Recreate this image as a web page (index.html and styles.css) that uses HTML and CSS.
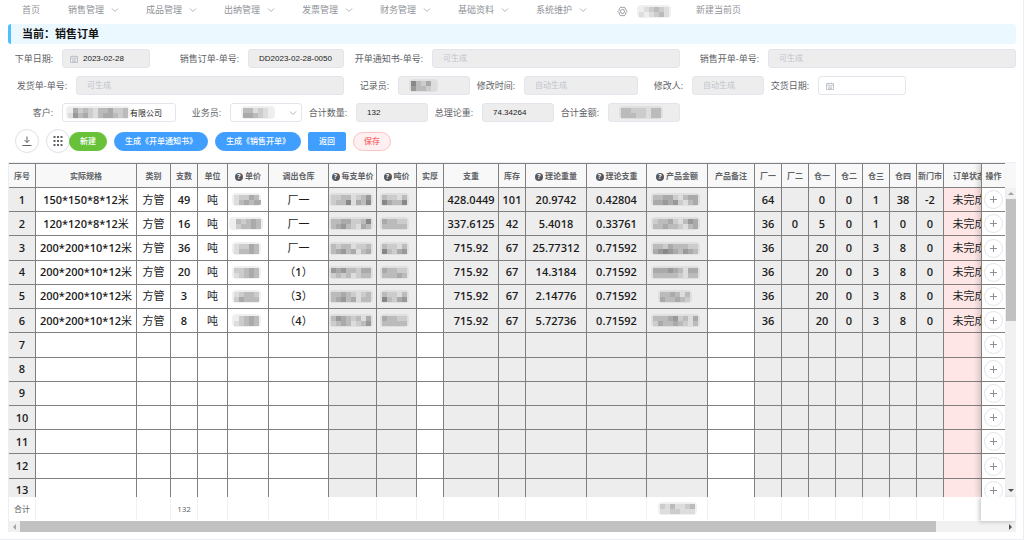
FILE: index.html
```html
<!DOCTYPE html>
<html lang="zh-CN">
<head>
<meta charset="utf-8">
<title>销售订单</title>
<link rel="stylesheet" href="styles.css">
</head>
<body>
<main class="page">
  <nav class="nav">
    <a class="nav-item home" href="#">首页</a>
    <a class="nav-item" href="#">销售管理<svg class="chev" viewBox="0 0 8 8"><path d="M1 2.5l3 3 3-3"/></svg></a>
    <a class="nav-item" href="#">成品管理<svg class="chev" viewBox="0 0 8 8"><path d="M1 2.5l3 3 3-3"/></svg></a>
    <a class="nav-item" href="#">出纳管理<svg class="chev" viewBox="0 0 8 8"><path d="M1 2.5l3 3 3-3"/></svg></a>
    <a class="nav-item" href="#">发票管理<svg class="chev" viewBox="0 0 8 8"><path d="M1 2.5l3 3 3-3"/></svg></a>
    <a class="nav-item" href="#">财务管理<svg class="chev" viewBox="0 0 8 8"><path d="M1 2.5l3 3 3-3"/></svg></a>
    <a class="nav-item" href="#">基础资料<svg class="chev" viewBox="0 0 8 8"><path d="M1 2.5l3 3 3-3"/></svg></a>
    <a class="nav-item" href="#">系统维护<svg class="chev" viewBox="0 0 8 8"><path d="M1 2.5l3 3 3-3"/></svg></a>
    <a class="nav-user" href="#" aria-label="用户设置">
      <svg class="gear" viewBox="0 0 12 12"><path d="M4 1.2q2 1 4 0l2.9 4.8q-1.9 1.2-1.6 3L8 10.8q-2-1-4 0L2.7 9Q2.900 7.200 1.100 6 2.900 4.800 2.700 3z"/><circle cx="6" cy="6" r="2.200"/></svg>
      <span data-mosaic="edcbcd|dedcbd"></span>
    </a>
    <a class="nav-item" href="#">新建当前页</a>
  </nav>

  <h1 class="title">当前：销售订单</h1>

  <form class="form" id="order">
    <div class="row">
      <div class="field"><label class="w46" for="f1">下单日期:</label><span class="box w88 off icon"><svg class="cal" viewBox="0 0 8 8"><path d="M.5 1.500h7v6h-7zM.5 3.200h7M2.500.5v1.500M5.500.5v1.500M2 5h4M2 6.300h4"/></svg><input id="f1" value="2023-02-28" disabled></span></div>
      <div class="field"><label class="w84" for="f2">销售订单-单号:</label><span class="box w96 off"><input id="f2" value="DD2023-02-28-0050" disabled></span></div>
      <div class="field grow"><label class="w74" for="f3">开单通知书-单号:</label><span class="box fill off"><input id="f3" placeholder="可生成" disabled></span></div>
      <div class="field grow"><label class="w74" for="f4">销售开单-单号:</label><span class="box fill off"><input id="f4" placeholder="可生成" disabled></span></div>
    </div>
    <div class="row">
      <div class="field"><label class="w60" for="f5">发货单-单号:</label><span class="box w268 off"><input id="f5" placeholder="可生成" disabled></span></div>
      <div class="field"><label class="w40" for="f6">记录员:</label><span class="box w72 off"><span class="veil" data-mosaic="8bcad|9bbcd"></span><input id="f6" disabled></span></div>
      <div class="field"><label class="w40" for="f7">修改时间:</label><span class="box w114 off"><input id="f7" placeholder="自动生成" disabled></span></div>
      <div class="field"><label class="w40" for="f8">修改人:</label><span class="box w72 off"><input id="f8" placeholder="自动生成" disabled></span></div>
      <div class="field"><label class="w40" for="f9">交货日期:</label><span class="box w88 icon"><svg class="cal" viewBox="0 0 8 8"><path d="M.5 1.500h7v6h-7zM.5 3.200h7M2.500.5v1.500M5.500.5v1.500M2 5h4M2 6.300h4"/></svg><input id="f9"></span></div>
    </div>
    <div class="row">
      <div class="field"><label class="w46" for="f10">客户:</label><span class="box w114"><span class="veil near" data-mosaic="eacbcdbbaccb|d9bacdbaabcb"></span><input id="f10" value="有限公司"></span></div>
      <div class="field"><label class="w40" for="f11">业务员:</label><span class="box w72"><span class="veil" data-mosaic="bbdcde|aabcde"></span><select id="f11"><option></option></select><svg class="chev" viewBox="0 0 8 8"><path d="M1 2.500l3 3 3-3"/></svg></span></div>
      <div class="field"><label class="w40" for="f12">合计数量:</label><span class="box w72 off"><input id="f12" value="132" disabled></span></div>
      <div class="field"><label class="w40" for="f13">总理论重:</label><span class="box w72 off"><input id="f13" value="74.34264" disabled></span></div>
      <div class="field"><label class="w40" for="f14">合计金额:</label><span class="box w72 off"><span class="veil" data-mosaic="bbcccdbb|bbbccdbb"></span><input id="f14" disabled></span></div>
    </div>
  </form>

  <div class="tools">
    <button class="round" aria-label="下载"><svg viewBox="0 0 12 12"><path d="M6 1.500v6M3.500 5L6 7.500 8.500 5M1.500 10.500h9"/></svg></button>
    <button class="round grid" aria-label="列设置"><svg viewBox="0 0 12 12"><path d="M1.500 2h2M5 2h2M8.500 2h2M1.500 6h2M5 6h2M8.500 6h2M1.500 10h2M5 10h2M8.500 10h2"/></svg></button>
    <button class="btn green">新建</button>
    <button class="btn blue">生成《开单通知书》</button>
    <button class="btn blue">生成《销售开单》</button>
    <button class="btn blue square">返回</button>
    <button class="btn red">保存</button>
  </div>

  <section class="sheet">
    <div class="view">
      <div class="scroll"><table class="data" id="main"></table></div>
      <div class="pinned"><table class="data" id="ops"></table></div>
      <div class="vside">
        <div class="vhead"></div>
        <div class="vbar"><i class="arrow up"></i><i class="vthumb"></i><i class="arrow down"></i></div>
      </div>
    </div>
    <div class="foot">
      <div class="scroll"><table class="sum" id="sum"></table></div>
      <div class="corner"></div>
    </div>
    <div class="hbar"><i class="arrow left"></i><span class="track"><i class="hthumb"></i></span><i class="arrow right"></i></div>
  </section>
</main>
<script src="script.js"></script>
</body>
</html>
```

FILE: styles.css
```css
* { box-sizing: border-box; }

body {
  margin: 0;
  background: #fff;
  color: #606266;
  font-family: "Open Sans", "Noto Sans CJK SC", sans-serif;
  font-size: 9px;
  line-height: 12px;
}

button, input, select { font: inherit; color: inherit; margin: 0; padding: 0; }
svg { fill: none; stroke: currentColor; flex: none; }

.page {
  min-height: 540px;
  padding: 0 7px 7px 8px;
  border-right: 1px solid #ebeef5;
  border-bottom: 1px solid #ebeef5;
}

/* navigation */
.nav { display: flex; align-items: center; height: 24px; padding: 0 0 4px 14px; color: #909399; }
.nav a { color: inherit; text-decoration: none; }
.nav-item { display: flex; align-items: center; gap: 7px; width: 78px; white-space: nowrap; }
.nav-item.home { width: 46px; }
.chev { width: 8px; height: 8px; stroke-width: 1; color: #b0b3b9; }
.nav-user { display: flex; align-items: center; gap: 9px; width: 82px; padding: 3px 0 0 3px; }
.gear { width: 11px; height: 11px; }

.title {
  margin: 0 0 5px;
  padding: 0 11px;
  height: 20px;
  line-height: 20px;
  font-size: 11px;
  font-weight: 700;
  color: #111;
  background: #ecf8ff;
  border-left: 3px solid #50bfff;
  border-radius: 3px;
}

/* order form */
.form { display: flex; flex-direction: column; gap: 8px; }
.row { display: flex; gap: 6px; }
.field { display: flex; align-items: center; gap: 8px; }
.field label { padding-right: 1px; text-align: right; white-space: nowrap; }
.grow { flex: 1; }
.box {
  display: flex;
  align-items: center;
  height: 19px;
  padding: 0 10px;
  border: 1px solid #e2e5eb;
  border-radius: 3px;
  background: #fff;
  color: #333;
  font-family: "Liberation Sans", "Noto Sans CJK SC", sans-serif;
  font-size: 8px;
}
.off { background: #ededed; }
.box input, .box select { flex: 1; width: 0; min-width: 0; height: 16px; border: 0; background: none; outline: 0; appearance: none; opacity: 1; color: #222; }
.box input::placeholder { color: #c0c4cc; opacity: 1; }
.icon { padding: 0 7px; gap: 5px; }
.cal { width: 8px; height: 8px; color: #c0c4cc; stroke-width: 1; }
.box .chev { margin-right: -6px; }
.near { margin-left: -7px; }
.fill { flex: 1; }
.w40 { width: 40px; }
.w46 { width: 46px; }
.w60 { width: 60px; }
.w72 { width: 72px; }
.w74 { width: 74px; }
.w84 { width: 84px; }
.w88 { width: 88px; }
.w96 { width: 96px; }
.w114 { width: 114px; }
.w268 { width: 268px; }

.mosaic { display: block; stroke: none; border-radius: 3px; }

/* toolbar */
.tools { display: flex; align-items: center; gap: 7px; padding: 7px 0 9px 7px; }
.round { display: flex; align-items: center; justify-content: center; width: 24px; height: 24px; border: 1px solid #dcdfe6; border-radius: 12px; background: #fff; color: #606266; }
.round svg { width: 12px; height: 12px; }
.round.grid { margin-right: -8px; }
.grid svg { stroke-width: 2; }
.btn { height: 19px; padding: 0 10px; border: 1px solid; border-radius: 10px; font-size: 8px; line-height: 12px; font-weight: 500; white-space: nowrap; }
.green { background: #67c23a; border-color: #67c23a; color: #fff; }
.blue { background: #409eff; border-color: #409eff; color: #fff; }
.square { border-radius: 2px; }
.red { background: #fef0f0; border-color: #fbc4c4; color: #f56c6c; }

/* sheet */
.sheet { border: 1px solid #ebeef5; border-width: 1px 0 0 1px; }
.view { display: flex; max-height: 334px; overflow: hidden; }
.scroll { flex: 1; min-width: 0; overflow: hidden; }
.data, .sum { table-layout: fixed; border-collapse: separate; border-spacing: 0; width: 100%; }
#main, #sum { min-width: 986px; }
.data { height: 340px; }
.data th, .data td { padding: 0; border: 0 solid #808080; border-width: 0 1px 1px 0; text-align: center; white-space: nowrap; line-height: 16px; overflow: hidden; }
.data thead th { height: 25px; border-top-width: 1px; background: #f8f8f8; color: #606266; font-size: 8px; font-weight: 700; }
.data tbody td { color: #1c1c1c; font-size: 11px; font-weight: 600; }
.zh { font-weight: 400; }
.data .gray { background: #ededed; }
.data .pink { background: #ffe6e6; }
.data .mosaic { margin: 0 auto; }
.data td:has(.mosaic) { padding-right: 4px; }
.help { display: inline-block; width: 8px; height: 8px; margin-right: 2px; border-radius: 4px; background: #55585e; color: #fff; font-size: 7px; line-height: 8px; }

.pinned { position: relative; z-index: 1; width: 24px; border-left: 1px solid #808080; background: #fff; box-shadow: -3px 0 5px rgba(0, 0, 0, .15); }
.data.ops td, .data.ops th { border-right-width: 0; }
.plus { display: block; width: 19px; height: 19px; margin: 0 auto; border: 1px solid #e2e5eb; border-radius: 10px; background: #fff; color: #8a8f99; }
.plus svg { display: block; width: 9px; height: 9px; margin: 0 auto; }

.vside { display: flex; flex-direction: column; width: 11px; }
.vhead { height: 25px; background: #f8f8f8; }
.vbar { flex: 1; display: flex; flex-direction: column; align-items: center; background: #f1f1f1; }
.vthumb { width: 10px; height: 122px; margin-bottom: auto; background: #c1c1c1; }
.arrow { border: 3px solid transparent; }
.up { border-top: 0; border-bottom-color: #a3a3a3; margin: 4px 0; }
.down { border-bottom: 0; border-top-color: #505050; margin: 5px 0; }
.left { border-left: 0; border-right-color: #a3a3a3; margin: 0 4px; }
.right { border-right: 0; border-left-color: #505050; margin: 0 4px; }

.foot { display: flex; height: 24px; }
.sum td { height: 23px; padding: 0; border-right: 1px solid #f0f1f4; text-align: center; font-size: 8px; line-height: 12px; }
.sum .mosaic { margin: 0 auto; }
.corner { width: 35px; border-right: 1px solid #ebeef5; background: #fff; box-shadow: -2px 1px 4px rgba(0, 0, 0, .2); }
.hbar { display: flex; align-items: center; height: 11px; background: #f1f1f1; }
.track { flex: 1; }
.hthumb { display: block; width: 93%; height: 11px; background: #c1c1c1; }
```

FILE: script.js
```js
// Column: [title, width, cell class, has help icon]
const columns = [
  ['序号', 27, 'gray'], ['实际规格', 101, ''], ['类别', 34, ''], ['支数', 27, ''], ['单位', 30, ''],
  ['单价', 41, '', true], ['调出仓库', 60, ''], ['每支单价', 48, 'gray', true], ['吨价', 40, 'gray', true],
  ['实厚', 27, ''], ['支重', 55, 'gray'], ['库存', 27, 'gray'], ['理论重量', 61, 'gray', true],
  ['理论支重', 60, 'gray', true], ['产品金额', 61, 'gray', true], ['产品备注', 47, ''],
  ['厂一', 27, 'gray'], ['厂二', 27, 'gray'], ['仓一', 27, 'gray'], ['仓二', 27, 'gray'],
  ['仓三', 27, 'gray'], ['仓四', 27, 'gray'], ['新门市', 27, 'gray'], ['订单状态', 51, 'pink']
];

// Cells that start with # are hidden values, drawn as shaded blocks.
const P = ['#dccab|dbabaa', '#ebcbab|ecbbab', '#dccab|dbbab', '#ccbab|dcbab', '#dcbbc|cabbb', '#ecbab|dcbab'];
const U = ['#ccbbdcb9|cbb8dab8', '#bbaaccb8|ba9bcdab', '#bcbbdccb|ba9badba', '#9a9bbcaa|cbcbdcbb', '#bbabcdcb|ba9badbb', '#b9abcbda|cbabdcb9'];
const T = ['#bccdb|8abb8', '#abbcc|bbbbb', '#bccdb|8bca9', '#abbcc|bbbab', '#bccdb|8bca9', '#abbcc|bbbbb'];
const A = ['#bbaacdbaa|aa9a9cdba', '#cbbacdb9a|bbabbcdba', '#bbcabbbcc|a989ab9ab', '#aaa9abdaa|bbbbbcdbb', '#bbabdb|abbabc', '#bbba9cbda|cabbabcdb'];
const items = [
  ['150*150*8*12米', '方管', '49', '吨', P[0], '厂一', U[0], T[0], '', '428.0449', '101', '20.9742', '0.42804', A[0], '', '64', '', '0', '0', '1', '38', '-2', '未完成'],
  ['120*120*8*12米', '方管', '16', '吨', P[1], '厂一', U[1], T[1], '', '337.6125', '42', '5.4018', '0.33761', A[1], '', '36', '0', '5', '0', '1', '0', '0', '未完成'],
  ['200*200*10*12米', '方管', '36', '吨', P[2], '厂一', U[2], T[2], '', '715.92', '67', '25.77312', '0.71592', A[2], '', '36', '', '20', '0', '3', '8', '0', '未完成'],
  ['200*200*10*12米', '方管', '20', '吨', P[3], '（1）', U[3], T[3], '', '715.92', '67', '14.3184', '0.71592', A[3], '', '36', '', '20', '0', '3', '8', '0', '未完成'],
  ['200*200*10*12米', '方管', '3', '吨', P[4], '（3）', U[4], T[4], '', '715.92', '67', '2.14776', '0.71592', A[4], '', '36', '', '20', '0', '3', '8', '0', '未完成'],
  ['200*200*10*12米', '方管', '8', '吨', P[5], '（4）', U[5], T[5], '', '715.92', '67', '5.72736', '0.71592', A[5], '', '36', '', '20', '0', '3', '8', '0', '未完成']
];

function mosaic(code) {
  const lines = code.split('|');
  const w = lines[0].length * 5 + 4;
  const h = lines.length * 5 + 3;
  let out = `<svg class="mosaic" width="${w}" height="${h}"><rect width="${w}" height="${h}" rx="4" fill="#000" opacity=".06"/>`;
  lines.forEach((line, y) => [...line].forEach((c, x) => {
    out += `<rect x="${x * 5 + 2}" y="${y * 5 + 2}" width="5" height="5" fill="#${c}${c}${c}"/>`;
  }));
  return out + '</svg>';
}

function content(value) {
  if (value[0] === '#') return mosaic(value.slice(1));
  return value.replace(/[\u4e00-\u9fff（）]+/g, '<span class="zh">$&</span>');
}

const cols = '<colgroup>' + columns.map(c => `<col style="width:${c[1]}px">`).join('') + '</colgroup>';
const head = columns.map(c => `<th>${c[3] ? '<span class="help">?</span>' : ''}${c[0]}</th>`).join('');
let body = '';
let ops = '';
for (let r = 0; r < 13; r++) {
  const row = [String(r + 1), ...(items[r] || [])];
  body += '<tr>' + columns.map((c, i) => `<td class="${c[2]}">${content(row[i] || '')}</td>`).join('') + '</tr>';
  ops += '<tr><td><button class="plus" aria-label="添加"><svg viewBox="0 0 9 9"><path d="M4.500 1v7M1 4.500h7"/></svg></button></td></tr>';
}
document.getElementById('main').innerHTML = `${cols}<thead><tr>${head}</tr></thead><tbody>${body}</tbody>`;
const opsTable = document.getElementById('ops');
opsTable.classList.add('ops');
opsTable.innerHTML = `<thead><tr><th>操作</th></tr></thead><tbody>${ops}</tbody>`;

const sums = { 0: '合计', 3: '132', 14: mosaic('cdbddcb|ddccddd') };
document.getElementById('sum').innerHTML = cols + '<tr>' + columns.map((c, i) => `<td>${sums[i] || ''}</td>`).join('') + '</tr>';

document.querySelectorAll('[data-mosaic]').forEach(el => { el.innerHTML = mosaic(el.dataset.mosaic); });
```
